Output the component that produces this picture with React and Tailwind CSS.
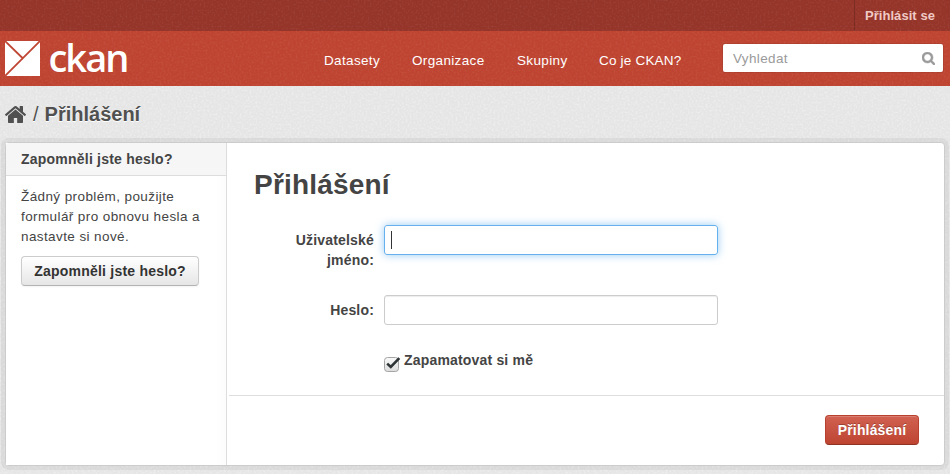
import React from "react";

function Grain({ id, opacity }) {
  return (
    <svg className="pointer-events-none absolute inset-0 h-full w-full" style={{ opacity }} aria-hidden="true">
      <filter id={id} x="0" y="0" width="100%" height="100%">
        <feTurbulence type="fractalNoise" baseFrequency="0.5" numOctaves="2" seed="4" />
        <feColorMatrix values="0 0 0 0 1  0 0 0 0 1  0 0 0 0 1  3 0 0 0 -1.3" />
      </filter>
      <rect width="100%" height="100%" filter={`url(#${id})`} />
    </svg>
  );
}

function HomeIcon() {
  return (
    <svg viewBox="89 253 1614 1283" preserveAspectRatio="none" className="h-[17px] w-[21px] fill-[#505050]">
      <path d="M1472 992v480q0 26-19 45t-45 19h-384v-384h-256v384h-384q-26 0-45-19t-19-45v-480q0-1 .5-3t.5-3l575-474 575 474q1 2 1 6zm223-69l-62 74q-8 9-21 11h-3q-13 0-21-7l-692-577-692 577q-12 8-24 7-13-2-21-11l-62-74q-8-10-7-23.5t11-21.5l719-599q32-26 76-26t76 26l244 204v-195q0-14 9-23t23-9h192q14 0 23 9t9 23v408l219 182q10 8 11 21.5t-7 23.5z" />
    </svg>
  );
}

function SearchIcon() {
  return (
    <svg viewBox="0 128 1664 1664" className="h-[13px] w-[13px] fill-[#999] stroke-[#999] stroke-[60]">
      <path d="M1152 832q0-185-131.5-316.5T704 384 387.5 515.5 256 832t131.5 316.5T704 1280t316.5-131.5T1152 832zm512 832q0 53-37.5 90.5T1536 1792q-54 0-90-38l-343-342q-179 124-399 124-143 0-273.5-55.5t-225-150-150-225T0 832t55.5-273.5 150-225 225-150T704 128t273.5 55.5 225 150 150 225T1408 832q0 220-124 399l343 343q37 37 37 90z" />
    </svg>
  );
}

function Logo() {
  return (
    <a className="flex w-[130px] items-start">
      <svg viewBox="0 0 35 35" className="mt-[10px] h-[35px] w-[35px]">
        <rect width="35" height="35" fill="#fff" />
        <path d="M0 0L18 17.5M35 0L0 35" stroke="#be4431" strokeWidth="1.8" />
      </svg>
      <span className="ml-[8.5px] font-['Open_Sans',sans-serif] text-[38px] leading-[52px] font-semibold tracking-[-2px] text-white">ckan</span>
    </a>
  );
}

export default function App() {
  return (
    <div className="relative h-[474px] w-[950px] overflow-hidden bg-[#e5e5e5] font-['Liberation_Sans',Arial,sans-serif] text-[14px] leading-5 text-[#444]">
      <Grain id="grain-page" opacity={0.3} />
      <div className="relative flex h-full flex-col">
        <header className="relative">
          <div className="flex h-[31px] justify-end bg-[#953429]">
            <a className="border-l border-[#7b2b22] pr-[15px] pl-[10px] text-[13px] leading-[31px] font-bold tracking-[0.06px] text-[#f0c9c4]">Přihlásit se</a>
          </div>
          <div className="flex h-[55px] bg-[#be4431] pl-[5px]">
            <Logo />
            <nav className="ml-[189px] flex gap-8 pt-[20px] text-[13.5px] text-white">
              <a className="w-[56px] whitespace-nowrap tracking-[0.35px]">Datasety</a>
              <a className="w-[73px] whitespace-nowrap tracking-[0.35px]">Organizace</a>
              <a className="w-[50px] whitespace-nowrap tracking-[0.35px]">Skupiny</a>
              <a className="w-[83px] whitespace-nowrap tracking-[0.2px]">Co je CKAN?</a>
            </nav>
            <div className="mt-[13px] ml-[41px] flex h-[28px] w-[220px] items-center justify-between rounded-[2px] bg-white pr-[8px] pl-[10px] shadow-[0_0_0_1px_rgba(0,0,0,0.08)]">
              <span className="pt-px text-[13.5px] tracking-[0.35px] text-[#999]">Vyhledat</span>
              <SearchIcon />
            </div>
          </div>
          <Grain id="grain-header" opacity={0.05} />
        </header>

        <div className="flex h-[56px] items-center pl-[5px] text-[20px] text-[#505050] [text-shadow:0_1px_0_#fff]">
          <HomeIcon />
          <span className="ml-[7px]">/</span>
          <h2 className="ml-[6px] font-bold">Přihlášení</h2>
        </div>

        <main className="mx-[5px] flex h-[324px] rounded-[4px] border border-[#ccc] bg-white shadow-[0_0_0_4px_rgba(0,0,0,0.05)]">
          <aside className="w-[221px] shrink-0 border-r border-[#ddd] bg-gradient-to-r from-white from-95% to-[#fcfcfc]">
            <h3 className="h-[33px] rounded-tl-[3px] border-b border-[#ddd] bg-[#f6f6f6] pl-[15px] leading-[33px] font-bold tracking-[0.22px]">Zapomněli jste heslo?</h3>
            <div className="pt-[11px] pl-[15px]">
              <p className="text-[13.5px] tracking-[0.4px] whitespace-nowrap">Žádný problém, použijte<br />formulář pro obnovu hesla a<br />nastavte si nové.</p>
              <button className="mt-[9px] h-[30px] w-[178px] rounded-[4px] border border-[#ccc] border-b-[#b3b3b3] bg-gradient-to-b from-white to-[#e6e6e6] font-bold tracking-[0.22px] whitespace-nowrap text-[#333] shadow-[0_1px_2px_rgba(0,0,0,0.05)]">Zapomněli jste heslo?</button>
            </div>
          </aside>
          <section className="flex grow flex-col">
            <form className="flex h-[252px] flex-col pl-[27px]">
              <h1 className="mt-[22px] text-[28px] leading-10 font-bold tracking-[0.2px]">Přihlášení</h1>
              <div className="mt-[20px] flex h-[70px] gap-[10px]">
                <label className="w-[120px] pt-[5px] text-right font-bold tracking-[0.18px]">Uživatelské<br />jméno:</label>
                <div className="flex h-[30px] w-[334px] items-center rounded-[3px] border border-[#66b0ee] pl-[6px] shadow-[0_0_8px_rgba(82,168,236,0.6)]">
                  <span className="h-[18px] w-px bg-[#333]" />
                </div>
              </div>
              <div className="flex h-[55px] gap-[10px]">
                <label className="w-[120px] pt-[5px] text-right font-bold tracking-[0.18px]">Heslo:</label>
                <div className="h-[30px] w-[334px] rounded-[3px] border border-[#ccc] shadow-[inset_0_1px_1px_rgba(0,0,0,0.075)]" />
              </div>
              <label className="flex pl-[130px] font-bold">
                <svg viewBox="0 0 17 17" className="mt-[6px] h-[17px] w-[17px]">
                  <defs>
                    <linearGradient id="check-face" x1="0" y1="0" x2="0" y2="1">
                      <stop offset="0" stopColor="#fafafa" />
                      <stop offset="1" stopColor="#dcdcdc" />
                    </linearGradient>
                  </defs>
                  <rect x="0.5" y="1.5" width="14" height="14" rx="3" fill="url(#check-face)" stroke="#a5a5a5" />
                  <path d="M3.2 7.6L6.8 11L15.3 2.2" fill="none" stroke="#2e3436" strokeWidth="2.6" />
                </svg>
                <span className="ml-[3px] tracking-[0.18px]">Zapamatovat si mě</span>
              </label>
            </form>
            <footer className="ml-[2px] flex grow justify-end border-t border-[#ddd] pt-[19px] pr-[25px]">
              <button className="h-[30px] w-[94px] rounded-[4px] border border-[#b8402e] border-b-[#8f3325] bg-gradient-to-b from-[#d16151] to-[#be4431] font-bold tracking-[0.15px] text-white shadow-[inset_0_1px_0_rgba(255,255,255,0.2)] [text-shadow:0_-1px_0_rgba(0,0,0,0.25)]">Přihlášení</button>
            </footer>
          </section>
        </main>
      </div>
    </div>
  );
}
